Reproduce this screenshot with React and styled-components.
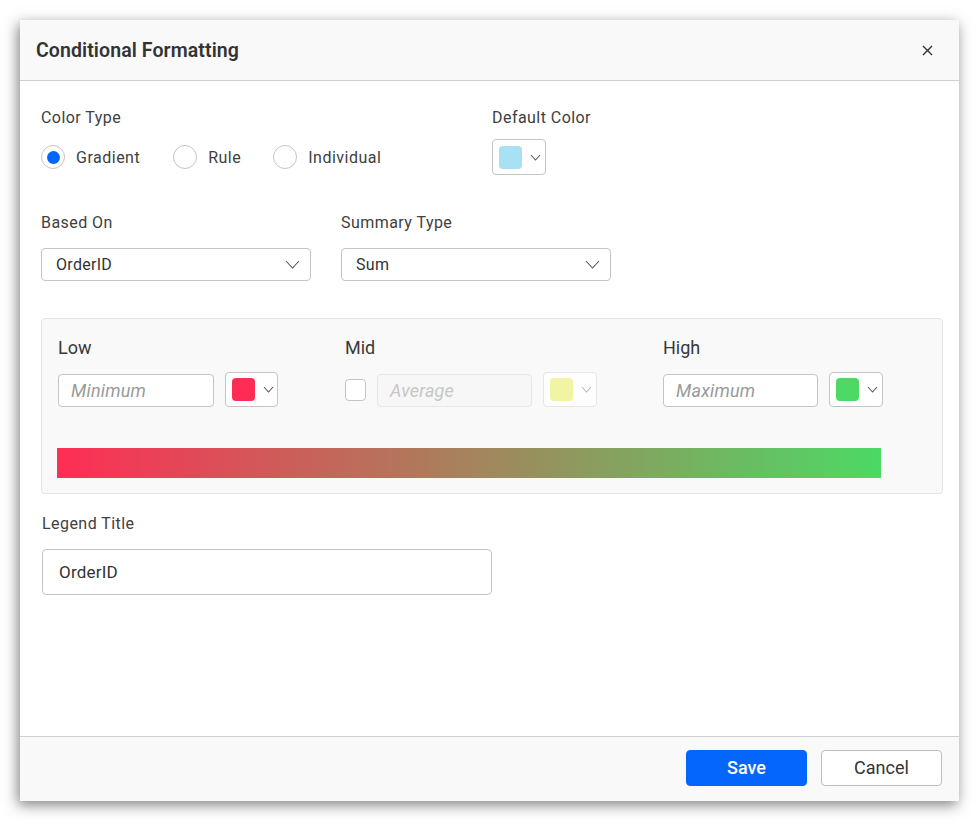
import React from "react";
import styled, { createGlobalStyle } from "styled-components";

const Global = createGlobalStyle`
  html, body { margin: 0; padding: 0; background: #ffffff; }
  body { font-family: Roboto, "Noto Sans", "Liberation Sans", sans-serif; color: #333333; }
  * { box-sizing: border-box; }
`;

const Page = styled.div`
  width: 979px;
  height: 822px;
  padding: 20px 0 0 20px;
`;

const Dialog = styled.div`
  width: 939px;
  height: 781px;
  background: #ffffff;
  display: flex;
  flex-direction: column;
  box-shadow: -2px 4px 13px rgba(0, 0, 0, 0.5);
`;

const Header = styled.div`
  height: 61px;
  flex: none;
  background: #f9f9f9;
  border-bottom: 1px solid #cfcfcf;
  display: flex;
  align-items: center;
  justify-content: space-between;
  padding: 0 26px 0 16px;
`;

const Title = styled.div`
  font-size: 19.5px;
  font-weight: 600;
  color: #333333;
  letter-spacing: 0.1px;
`;

const CloseButton = styled.button`
  border: none;
  background: transparent;
  padding: 0;
  width: 12px;
  height: 12px;
  display: flex;
  align-items: center;
  justify-content: center;
  cursor: pointer;
`;

const Body = styled.div`
  flex: 1;
  padding: 26px 16px 0 21px;
  display: flex;
  flex-direction: column;
`;

const TopRow = styled.div`
  display: grid;
  grid-template-columns: ${(p) => p.$cols};
  margin-top: ${(p) => p.$mt || 0}px;
`;

const Field = styled.div`
  display: flex;
  flex-direction: column;
  gap: ${(p) => p.$gap || 12}px;
`;

const Label = styled.div`
  font-size: 16px;
  height: 20px;
  padding-top: 2px;
  line-height: 18px;
  color: #404040;
  letter-spacing: 0.45px;
`;

const RadioGroup = styled.div`
  display: flex;
  align-items: center;
  height: 36px;
`;

const RadioItem = styled.label`
  display: flex;
  align-items: center;
  gap: 11px;
  font-size: 16px;
  color: #404040;
  letter-spacing: 0.5px;
  margin-right: ${(p) => p.$mr}px;
`;

const RadioCircle = styled.span`
  width: 24px;
  height: 24px;
  border-radius: 50%;
  border: 1px solid #c4c4c4;
  background: #ffffff;
  display: flex;
  align-items: center;
  justify-content: center;
  &::after {
    content: "";
    width: 13px;
    height: 13px;
    border-radius: 50%;
    background: ${(p) => (p.$checked ? "#0066ff" : "transparent")};
  }
`;

const PickerButton = styled.div`
  width: ${(p) => p.$w || 54}px;
  height: ${(p) => p.$h || 36}px;
  border: 1px solid ${(p) => (p.$disabled ? "#e3e3e3" : "#c4c4c4")};
  border-radius: 4px;
  background: #ffffff;
  display: flex;
  align-items: center;
  padding-left: 6px;
  gap: 8px;
  opacity: ${(p) => (p.$disabled ? 0.85 : 1)};
`;

const Swatch = styled.span`
  width: 23px;
  height: 23px;
  border-radius: 4px;
  background: ${(p) => p.$color};
`;

const Select = styled.div`
  width: 270px;
  height: 33px;
  border: 1px solid #c4c4c4;
  border-radius: 4px;
  background: #ffffff;
  display: flex;
  align-items: center;
  justify-content: space-between;
  padding: 0 10px 0 14px;
  font-size: 16px;
  letter-spacing: 0.3px;
  color: #333333;
`;

const Panel = styled.div`
  margin-top: 37px;
  width: 902px;
  height: 176px;
  background: #f9f9f9;
  border: 1px solid #e4e4e4;
  border-radius: 4px;
  padding: 18px 16px 0 16px;
  display: flex;
  flex-direction: column;
`;

const StopsRow = styled.div`
  display: grid;
  grid-template-columns: 287px 318px auto;
`;

const StopLabel = styled.div`
  font-size: 18px;
  height: 20px;
  padding-top: 2px;
  line-height: 18px;
  color: #383838;
`;

const StopField = styled.div`
  display: flex;
  flex-direction: column;
  gap: 15px;
`;

const Controls = styled.div`
  display: flex;
  align-items: flex-end;
  gap: 11px;
`;

const ValueInput = styled.div`
  width: ${(p) => p.$w || 155}px;
  height: 33px;
  border: 1px solid ${(p) => (p.$disabled ? "#e6e6e6" : "#c4c4c4")};
  border-radius: 4px;
  background: ${(p) => (p.$disabled ? "#f7f7f7" : "#ffffff")};
  display: flex;
  align-items: center;
  padding-left: 12px;
  font-size: 18px;
  font-style: italic;
  letter-spacing: 0.2px;
  color: ${(p) => (p.$disabled ? "#c6c6c6" : "#9a9a9a")};
`;

const Checkbox = styled.span`
  width: 21px;
  height: 22px;
  border: 1px solid #c4c4c4;
  border-radius: 4px;
  background: #ffffff;
  margin-bottom: 6px;
`;

const GradientBar = styled.div`
  margin-top: 41px;
  margin-left: -1px;
  width: 824px;
  height: 30px;
  background: linear-gradient(to right, #ff2d55, #4cd964);
`;

const LegendField = styled(Field)`
  margin-top: 19px;
  margin-left: 1px;
  gap: 16px;
`;

const TextInput = styled.div`
  width: 450px;
  height: 46px;
  border: 1px solid #c4c4c4;
  border-radius: 4px;
  display: flex;
  align-items: center;
  padding-left: 16px;
  font-size: 17px;
  letter-spacing: 0.2px;
  color: #333333;
`;

const Footer = styled.div`
  height: 65px;
  flex: none;
  background: #f9f9f9;
  border-top: 1px solid #cfcfcf;
  display: flex;
  justify-content: flex-end;
  align-items: flex-start;
  gap: 14px;
  padding: 13px 17px 0 0;
`;

const Button = styled.button`
  width: 121px;
  height: 36px;
  border-radius: 4px;
  padding: 0 0 2px 0;
  font-family: Roboto, "Liberation Sans", sans-serif;
  font-size: 18px;
  font-weight: ${(p) => (p.$primary ? 500 : 400)};
  background: ${(p) => (p.$primary ? "#0566fd" : "#ffffff")};
  color: ${(p) => (p.$primary ? "#ffffff" : "#333333")};
  border: 1px solid ${(p) => (p.$primary ? "#0566fd" : "#bdbdbd")};
  cursor: pointer;
`;

const Chevron = ({ w = 9, h = 5, color = "#555" }) => (
  <svg width={w + 2} height={h + 2} viewBox={`-1 -1 ${w + 2} ${h + 2}`}>
    <polyline points={`0,0 ${w / 2},${h} ${w},0`} fill="none" stroke={color} strokeWidth="1.1" />
  </svg>
);

const Picker = ({ color, disabled, h, w }) => (
  <PickerButton $disabled={disabled} $h={h} $w={w}>
    <Swatch $color={color} />
    <Chevron color={disabled ? "#aaa" : "#555"} />
  </PickerButton>
);

export default function App() {
  return (
    <>
      <Global />
      <Page>
        <Dialog>
          <Header>
            <Title>Conditional Formatting</Title>
            <CloseButton aria-label="close">
              <svg width="11" height="11" viewBox="0 0 11 11">
                <path d="M1 1L10 10M10 1L1 10" stroke="#333" strokeWidth="1.4" />
              </svg>
            </CloseButton>
          </Header>
          <Body>
            <TopRow $cols="451px auto">
              <Field>
                <Label>Color Type</Label>
                <RadioGroup>
                  <RadioItem $mr={33}>
                    <RadioCircle $checked />
                    Gradient
                  </RadioItem>
                  <RadioItem $mr={32}>
                    <RadioCircle />
                    Rule
                  </RadioItem>
                  <RadioItem $mr={0}>
                    <RadioCircle />
                    Individual
                  </RadioItem>
                </RadioGroup>
              </Field>
              <Field>
                <Label>Default Color</Label>
                <Picker color="#a9e1f4" />
              </Field>
            </TopRow>
            <TopRow $cols="300px auto" $mt={37}>
              <Field $gap={16}>
                <Label>Based On</Label>
                <Select>
                  OrderID
                  <Chevron w={13} h={7} />
                </Select>
              </Field>
              <Field $gap={16}>
                <Label>Summary Type</Label>
                <Select>
                  Sum
                  <Chevron w={13} h={7} />
                </Select>
              </Field>
            </TopRow>
            <Panel>
              <StopsRow>
                <StopField>
                  <StopLabel>Low</StopLabel>
                  <Controls>
                    <ValueInput $w={156}>Minimum</ValueInput>
                    <Picker color="#ff2d55" h={35} w={53} />
                  </Controls>
                </StopField>
                <StopField>
                  <StopLabel>Mid</StopLabel>
                  <Controls>
                    <Checkbox />
                    <ValueInput $disabled>Average</ValueInput>
                    <Picker color="#f0f595" h={35} disabled />
                  </Controls>
                </StopField>
                <StopField>
                  <StopLabel>High</StopLabel>
                  <Controls>
                    <ValueInput>Maximum</ValueInput>
                    <Picker color="#4cd964" h={35} />
                  </Controls>
                </StopField>
              </StopsRow>
              <GradientBar />
            </Panel>
            <LegendField>
              <Label>Legend Title</Label>
              <TextInput>OrderID</TextInput>
            </LegendField>
          </Body>
          <Footer>
            <Button $primary>Save</Button>
            <Button>Cancel</Button>
          </Footer>
        </Dialog>
      </Page>
    </>
  );
}
